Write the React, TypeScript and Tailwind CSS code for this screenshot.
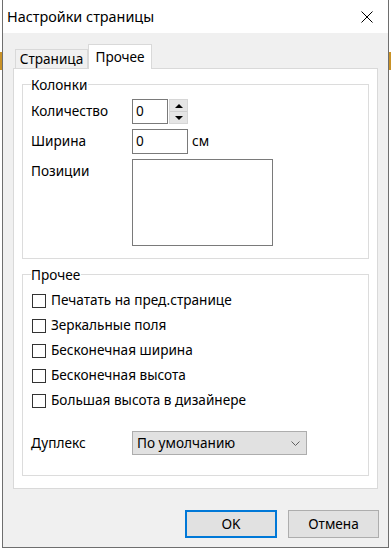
const checks = [
  'Печатать на пред.странице',
  'Зеркальные поля',
  'Бесконечная ширина',
  'Бесконечная высота',
  'Большая высота в дизайнере',
];

function Spinner() {
  return (
    <div className="ml-px w-[19px] h-[25px] flex flex-col border border-[#d6d6d6] bg-[#e5e5e5]">
      <div className="flex-1 flex items-center justify-center border-b border-[#cfcfcf]">
        <svg width="8" height="4" viewBox="0 0 8 4"><path d="M0 4L4 0L8 4Z" fill="#000" /></svg>
      </div>
      <div className="flex-1 flex items-center justify-center">
        <svg width="8" height="4" viewBox="0 0 8 4"><path d="M0 0L8 0L4 4Z" fill="#000" /></svg>
      </div>
    </div>
  );
}

export default function App() {
  return (
    <div className="w-[391px] h-[552px] overflow-hidden bg-white bg-[linear-gradient(to_bottom,transparent_52px,#c99227_52px,#c99227_70px,transparent_70px)] font-['Noto_Sans',sans-serif] text-[13.6px] text-black">
      <div className="ml-[2px] w-[387px] h-[548px] flex flex-col border border-t-0 border-[#6e6e6e] bg-[#f0f0f0]">
        <div className="h-[33px] shrink-0 bg-white flex items-center justify-between pl-[4px] pr-[15px]">
          <span className="text-[14.4px]">Настройки страницы</span>
          <svg width="12" height="12" viewBox="0 0 12 12">
            <path d="M0.5 0.5L11.5 11.5M11.5 0.5L0.5 11.5" stroke="#000" strokeWidth="1" />
          </svg>
        </div>

        <div className="flex-1 flex flex-col pl-[10px] pr-[10px] pt-[11px]">
          <div className="h-[24px] flex items-end pl-[2px]">
            <div className="w-[73px] h-[19px] flex items-center justify-center border border-b-0 border-[#d9d9d9] bg-[#f0f0f0]">
              Страница
            </div>
            <div className="relative z-10 -mb-px w-[64px] h-[25px] flex items-center justify-center border border-b-0 border-[#d9d9d9] bg-white">
              Прочее
            </div>
          </div>

          <div className="h-[421px] flex flex-col border border-[#d9d9d9] bg-white px-[8px] pt-[7px]">
            <fieldset className="border border-[#dcdcdc] pl-[8px] pb-[12px]">
              <legend className="leading-[17px] pr-[1px]">Колонки</legend>
              <div className="flex flex-col gap-[5px] pt-[6px]">
                <div className="h-[25px] flex items-center">
                  <span className="w-[101px]">Количество</span>
                  <div className="w-[36px] h-[25px] border border-[#7a7a7a] bg-white pl-[3px] flex items-center">0</div>
                  <Spinner />
                </div>
                <div className="h-[25px] flex items-center">
                  <span className="w-[101px]">Ширина</span>
                  <div className="w-[56px] h-[25px] border border-[#7a7a7a] bg-white pl-[3px] flex items-center">0</div>
                  <span className="ml-[4px]">см</span>
                </div>
                <div className="flex items-start">
                  <span className="w-[101px] pt-[2px]">Позиции</span>
                  <div className="w-[141px] h-[87px] border border-[#7a7a7a] bg-white" />
                </div>
              </div>
            </fieldset>

            <fieldset className="mt-[7px] border border-[#dcdcdc] pl-[8px] pb-[20px]">
              <legend className="leading-[17px] pr-[1px]">Прочее</legend>
              <div className="flex flex-col pt-[5px]">
                {checks.map((c) => (
                  <div key={c} className="h-[25px] flex items-center">
                    <span className="ml-[1px] w-[14px] h-[14px] border border-[#333] bg-white" />
                    <span className="ml-[5px]">{c}</span>
                  </div>
                ))}
                <div className="mt-[18px] h-[24px] flex items-center">
                  <span className="w-[101px]">Дуплекс</span>
                  <div className="w-[175px] h-[24px] border border-[#adadad] bg-[#e1e1e1] flex items-center justify-between pl-[4px] pr-[6px]">
                    <span>По умолчанию</span>
                    <svg width="9" height="5" viewBox="0 0 9 5">
                      <path d="M0.5 0.5L4.5 4.5L8.5 0.5" fill="none" stroke="#606060" strokeWidth="1" />
                    </svg>
                  </div>
                </div>
              </div>
            </fieldset>
          </div>

          <div className="mt-[21px] flex justify-end gap-[11px] -mr-px">
            <button className="w-[92px] h-[28px] border-2 border-[#0078d7] bg-[#e1e1e1]">OK</button>
            <button className="w-[91px] h-[28px] border border-[#adadad] bg-[#e1e1e1]">Отмена</button>
          </div>
        </div>
      </div>
    </div>
  );
}
